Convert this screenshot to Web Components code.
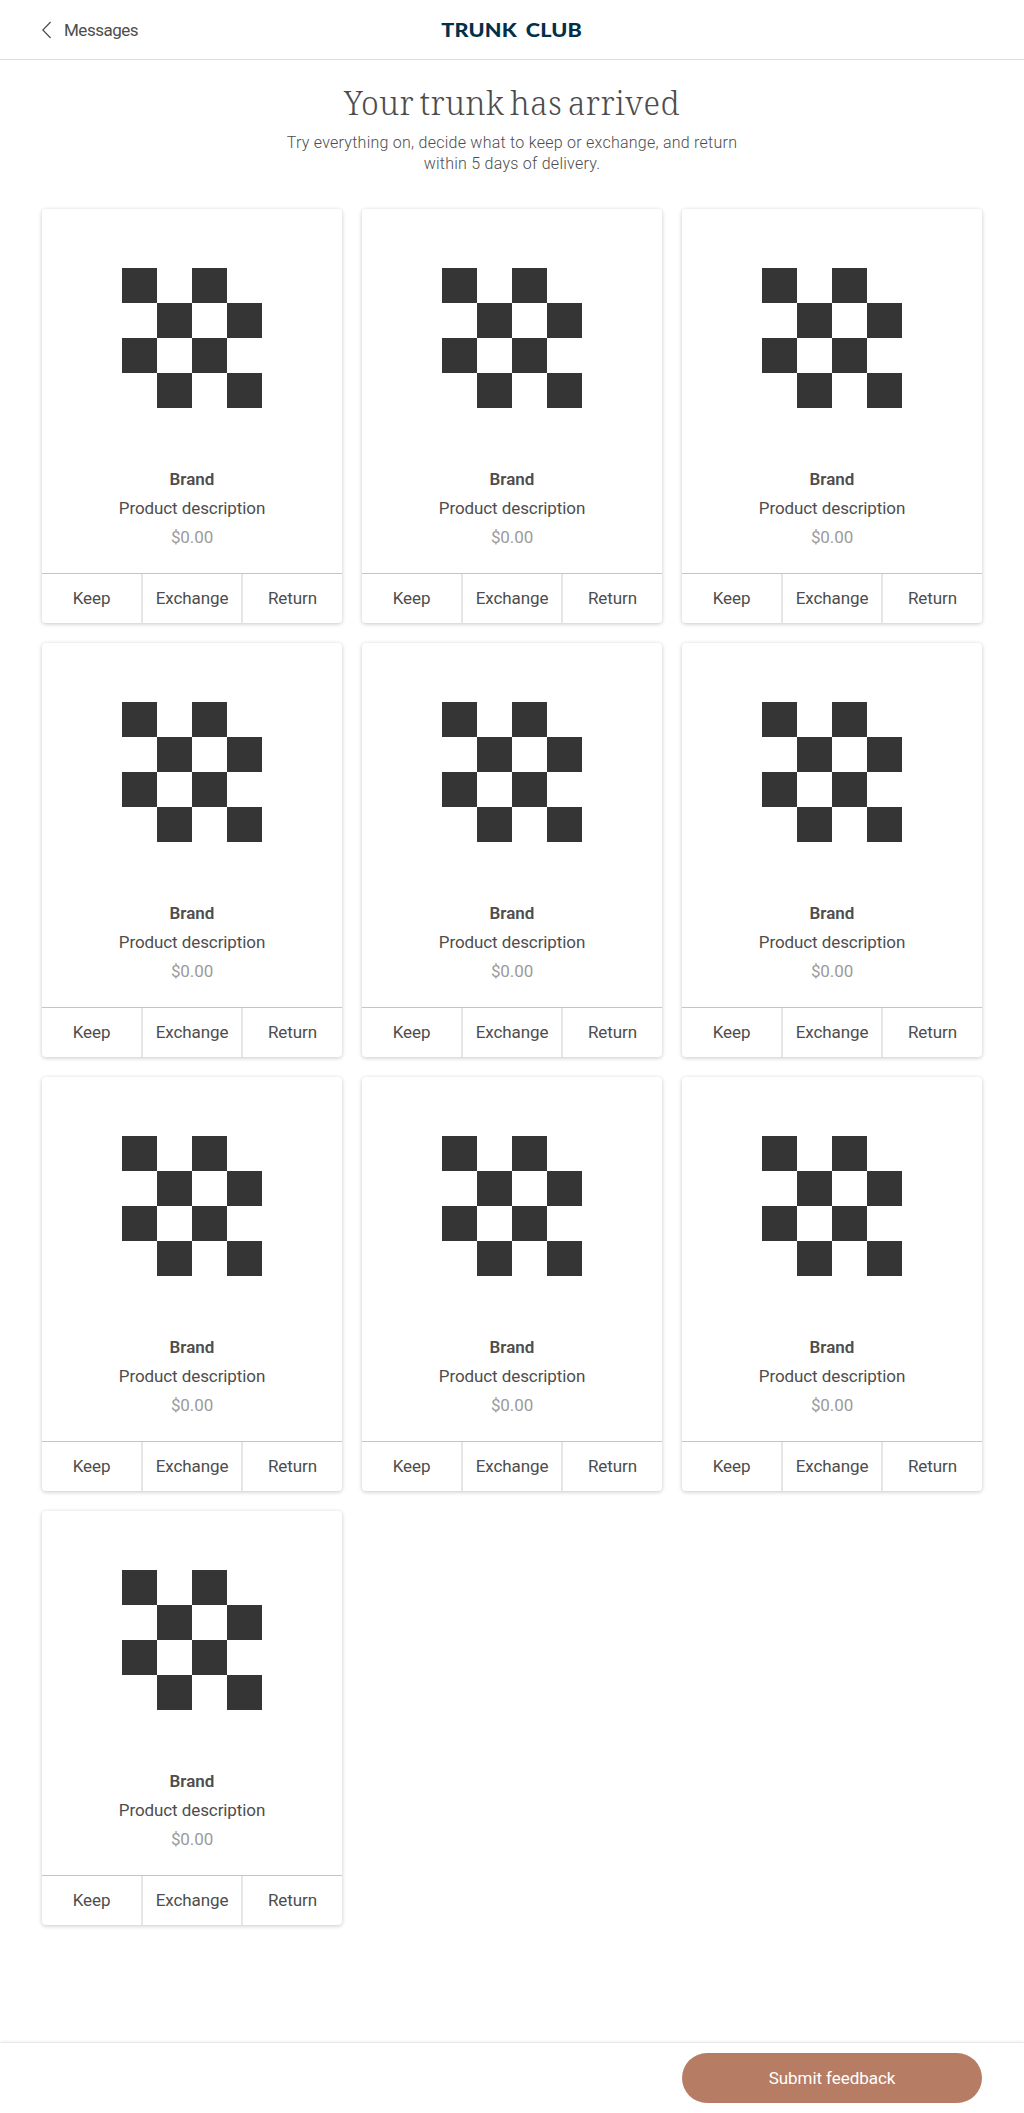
<!DOCTYPE html>
<html lang="en">
<head>
<meta charset="utf-8">
<title>Trunk Club</title>
<style>
body{margin:0;background:#fff;color:#4d4d4d;font:400 17px/29px Roboto,"Liberation Sans",sans-serif}
</style>
</head>
<body>
<trunk-page></trunk-page>
<script>
const define = (name, html) => customElements.define(name, class extends HTMLElement {
  constructor() {
    super();
    this.attachShadow({ mode: 'open' }).innerHTML = html;
  }
});

define('top-bar', `<style>
:host{display:grid;grid-template-columns:1fr auto 1fr;align-items:center;box-sizing:border-box;height:60px;padding:0 42px;border-bottom:1px solid #dedede}
.back{display:flex;align-items:center;gap:13px;letter-spacing:-.48px}
.label{padding-top:2px}
.logo{color:#022f49;font:900 18px/24px Lato,sans-serif;letter-spacing:.15px;word-spacing:3px;transform:scaleX(1.2)}
svg{display:block}
</style>
<div class="back"><svg width="9" height="18" viewBox="0 0 9 18" fill="none" stroke="#4a4a4a" stroke-width="1.2"><path d="M8.600 1L.8 9l7.800 8"/></svg><div class="label"><slot></slot></div></div>
<div class="logo">TRUNK CLUB</div>`);

define('page-intro', `<style>
:host{display:flex;flex-direction:column;align-items:center;text-align:center;height:149px;box-sizing:border-box;padding-top:22px}
h1{margin:0;font:300 32px/42px "Noto Serif","DejaVu Serif",serif;word-spacing:-3px;letter-spacing:.45px}
p{margin:8px 0 0;width:470px;font-size:16px;font-weight:300;line-height:21px;letter-spacing:.25px}
</style><h1><slot name="title"></slot></h1><p><slot></slot></p>`);

define('checker-mark', `<style>:host{display:block}svg{display:block}</style>
<svg width="140" height="140" viewBox="0 0 140 140" fill="#353535"><path d="M0 0h35v35H0zM70 0h35v35H70zM35 35h35v35H35zM105 35h35v35h-35zM0 70h35v35H0zM70 70h35v35H70zM35 105h35v35H35zM105 105h35v35h-35z"/></svg>`);

define('card-action', `<style>
:host{display:flex;align-items:center;justify-content:center;box-sizing:border-box;border-left:2px solid #e6e6e6}
:host(:first-child){border-left:0}
</style><slot></slot>`);

define('product-card', `<style>
:host{display:flex;flex-direction:column;height:414px;border-radius:4px;background:#fff;box-shadow:0 1px 4px rgba(0,0,0,.22);overflow:hidden}
.picture{display:flex;justify-content:center;padding-top:59px;height:197px}
.info{flex:1;display:flex;flex-direction:column;align-items:center}
.brand{font-weight:600}
.text{letter-spacing:-.09px}
.price{color:#9b9b9b;letter-spacing:-.1px}
.actions{display:grid;grid-template-columns:99px 100px 101px;box-sizing:border-box;height:50px;border-top:1px solid #c4c4c4;letter-spacing:-.08px}
</style>
<div class="picture"><checker-mark></checker-mark></div>
<div class="info"><div class="brand">Brand</div><div class="text">Product description</div><div class="price">$0.00</div></div>
<div class="actions"><card-action>Keep</card-action><card-action>Exchange</card-action><card-action>Return</card-action></div>`);

define('product-grid', `<style>
:host{display:grid;grid-template-columns:repeat(3,300px);gap:20px;padding:0 42px}
</style>${'<product-card></product-card>'.repeat(10)}`);

define('bottom-bar', `<style>
:host{display:flex;justify-content:flex-end;box-sizing:border-box;height:70px;padding:10px 42px;background:#fff;box-shadow:0 0 3px rgba(0,0,0,.22)}
button{width:300px;height:50px;border:0;border-radius:25px;background:#b77c64;color:#fff;font:inherit;letter-spacing:-.06px;padding:0}
</style><button><slot></slot></button>`);

define('trunk-page', `<style>
:host{display:flex;flex-direction:column;height:2113px;overflow:hidden}
product-grid{flex:1;align-content:start}
</style>
<top-bar>Messages</top-bar>
<page-intro><span slot="title">Your trunk has arrived</span>Try everything on, decide what to keep or exchange, and return<br>within 5 days of delivery.</page-intro>
<product-grid></product-grid>
<bottom-bar>Submit feedback</bottom-bar>`);
</script>
</body>
</html>
